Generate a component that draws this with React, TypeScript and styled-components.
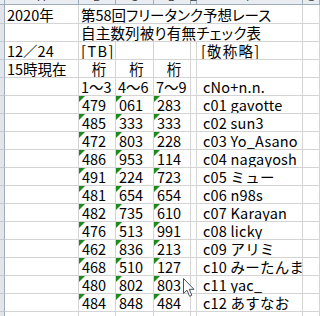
import React from "react";
import styled, { createGlobalStyle } from "styled-components";

const GlobalStyle = createGlobalStyle`
  html, body {
    margin: 0;
    padding: 0;
    background: #fff;
    overflow: hidden;
  }
`;

const COLS = "5px 74px 37px 38px 37px 6px 106px 1fr";
const GRID = "#d4d4d4";
const HEAD_LINE = "#9eabb8";

const Sheet = styled.div`
  position: relative;
  width: 320px;
  height: 316px;
  overflow: hidden;
  background: #fff;
  color: #000;
  font-family: "Noto Sans CJK JP", "Noto Sans", sans-serif;
  font-size: 14.5px;
`;

const HeaderRow = styled.div`
  display: grid;
  grid-template-columns: ${COLS};
  height: 21px;
  margin-top: -16px;
`;

const HeadCell = styled.div`
  box-sizing: border-box;
  display: flex;
  align-items: flex-end;
  justify-content: center;
  padding-bottom: 1px;
  background: #e9edf2;
  border-right: 1px solid ${HEAD_LINE};
  border-bottom: 1px solid ${HEAD_LINE};
  color: #3a3a3a;
  font: 11px/11px "Liberation Sans", sans-serif;
`;

const Row = styled.div<{ $h?: number }>`
  display: grid;
  grid-template-columns: ${COLS};
  height: ${(p) => p.$h ?? 18}px;
`;

const RowHead = styled.div`
  box-sizing: border-box;
  background: #e2e6ec;
  border-right: 1px solid ${HEAD_LINE};
  border-bottom: 1px solid #c3cad3;
`;

const Cell = styled.div<{
  $span?: number;
  $center?: boolean;
  $pad?: number;
  $flag?: boolean;
  $palt?: boolean;
  $ls?: number;
}>`
  position: relative;
  box-sizing: border-box;
  grid-column: span ${(p) => p.$span ?? 1};
  display: flex;
  align-items: flex-end;
  justify-content: ${(p) => (p.$center ? "center" : "flex-start")};
  padding-left: ${(p) => p.$pad ?? 2}px;
  border-right: 1px solid ${GRID};
  border-bottom: 1px solid ${GRID};
  white-space: nowrap;
  overflow: hidden;
  line-height: 17px;
  letter-spacing: ${(p) => p.$ls ?? 0}px;
  font-feature-settings: ${(p) => (p.$palt ? '"palt"' : "normal")};

  &::before {
    content: "";
    display: ${(p) => (p.$flag ? "block" : "none")};
    position: absolute;
    left: 0;
    top: 0;
    border-top: 6px solid #1d8a1d;
    border-right: 6px solid transparent;
  }
`;

const Cursor = styled.svg`
  position: absolute;
  left: 183px;
  top: 278px;
`;

type Entry = { a: string; b: string; c: string; no: string; name: string };

const entries: Entry[] = [
  { a: "479", b: "061", c: "283", no: "c01", name: "gavotte" },
  { a: "485", b: "333", c: "333", no: "c02", name: "sun3" },
  { a: "472", b: "803", c: "228", no: "c03", name: "Yo_Asano" },
  { a: "486", b: "953", c: "114", no: "c04", name: "nagayosh" },
  { a: "491", b: "224", c: "723", no: "c05", name: "ミュー" },
  { a: "481", b: "654", c: "654", no: "c06", name: "n98s" },
  { a: "482", b: "735", c: "610", no: "c07", name: "Karayan" },
  { a: "476", b: "513", c: "991", no: "c08", name: "licky" },
  { a: "462", b: "836", c: "213", no: "c09", name: "アリミ" },
  { a: "468", b: "510", c: "127", no: "c10", name: "みーたんま" },
  { a: "480", b: "802", c: "803", no: "c11", name: "yac_" },
  { a: "484", b: "848", c: "484", no: "c12", name: "あすなお" },
];

const letters = ["", "A", "B", "C", "D", "E", "F", "G"];

export default function App() {
  return (
    <Sheet>
      <GlobalStyle />
      <HeaderRow>
        {letters.map((l, i) => (
          <HeadCell key={i}>{l}</HeadCell>
        ))}
      </HeaderRow>

      <Row $h={19}>
        <RowHead />
        <Cell>2020年</Cell>
        <Cell $span={5} $palt>第58回フリータンク予想レース</Cell>
        <Cell />
      </Row>
      <Row>
        <RowHead />
        <Cell />
        <Cell $span={5} $palt $ls={0.2}>自主数列被り有無チェック表</Cell>
        <Cell />
      </Row>
      <Row>
        <RowHead />
        <Cell>12／24</Cell>
        <Cell $ls={1.5}>[TB]</Cell>
        <Cell />
        <Cell />
        <Cell />
        <Cell $pad={4} $ls={1.2}>[敬称略]</Cell>
        <Cell />
      </Row>
      <Row>
        <RowHead />
        <Cell>15時現在</Cell>
        <Cell $center $pad={4}>桁</Cell>
        <Cell $center $pad={4}>桁</Cell>
        <Cell $center $pad={4}>桁</Cell>
        <Cell />
        <Cell />
        <Cell />
      </Row>
      <Row>
        <RowHead />
        <Cell />
        <Cell>1～3</Cell>
        <Cell>4～6</Cell>
        <Cell>7～9</Cell>
        <Cell />
        <Cell $pad={6} $ls={0.2}>cNo+n.n.</Cell>
        <Cell />
      </Row>

      {entries.map((e) => (
        <Row key={e.no}>
          <RowHead />
          <Cell />
          <Cell $flag $pad={3}>{e.a}</Cell>
          <Cell $flag $pad={3}>{e.b}</Cell>
          <Cell $flag $pad={3}>{e.c}</Cell>
          <Cell />
          <Cell $pad={6} $ls={0.2}>{e.no} {e.name}</Cell>
          <Cell />
        </Row>
      ))}

      <Row>
        <RowHead />
        <Cell />
        <Cell />
        <Cell />
        <Cell />
        <Cell />
        <Cell />
        <Cell />
      </Row>

      <Cursor width="13" height="20" viewBox="0 0 13 20">
        <path
          d="M0.5 0.5 L0.5 15.5 L4 12.2 L6.6 18.3 L8.8 17.3 L6.3 11.3 L11 11.3 Z"
          fill="#fff"
          stroke="#4a5260"
          strokeWidth="1"
          strokeLinejoin="round"
        />
      </Cursor>
    </Sheet>
  );
}
